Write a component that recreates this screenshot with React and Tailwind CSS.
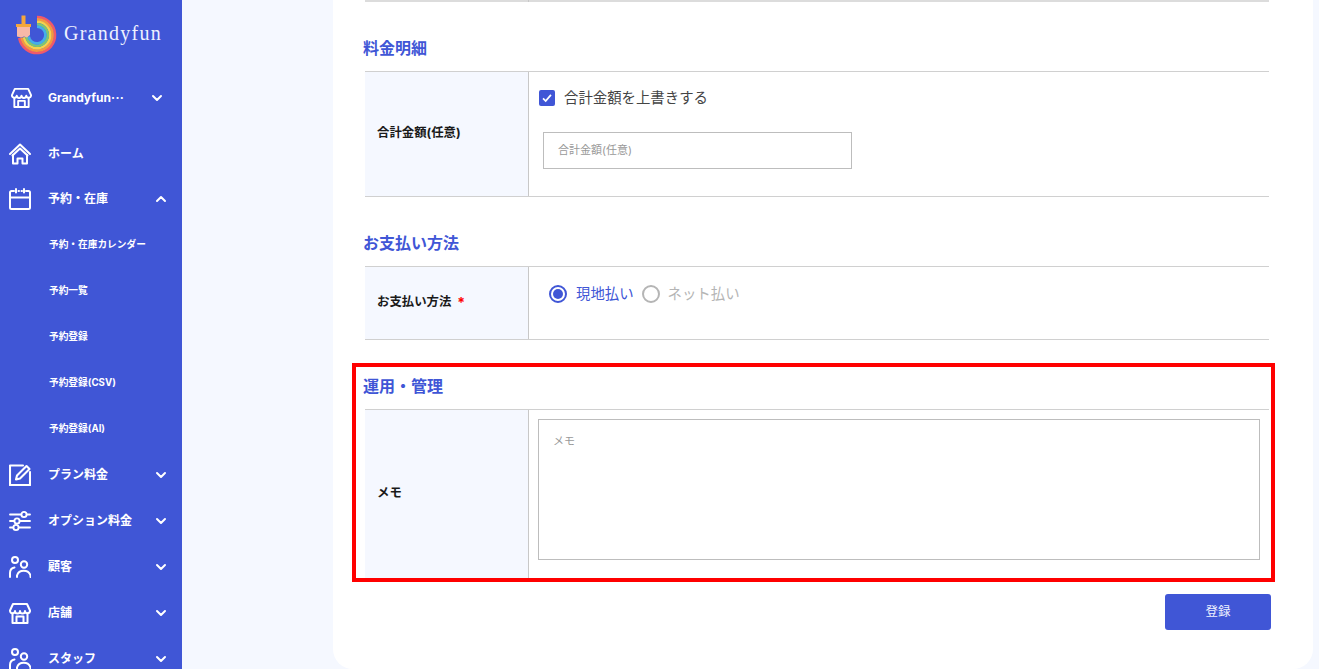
import { ChevronDown, ChevronUp } from "lucide-react";

const StoreIcon = ({ className }) => (
  <svg viewBox="0 0 22 22" fill="none" stroke="currentColor" strokeWidth="2" strokeLinejoin="round" strokeLinecap="round" className={className}>
    <path d="M4 2h14l3 6.500a2.500 2.500 0 0 1-5 .5 2.500 2.500 0 0 1-5 0 2.500 2.500 0 0 1-5 0 2.500 2.500 0 0 1-5-.5L4 2Z" />
    <path d="M3.500 11.500V21h15v-9.500" />
    <path d="M7.500 21v-6.500h7V21" />
  </svg>
);

const HomeIcon = ({ className }) => (
  <svg viewBox="0 0 22 22" fill="none" stroke="currentColor" strokeWidth="2" strokeLinejoin="round" strokeLinecap="round" className={className}>
    <path d="M1 11 11 1.500 21 11" />
    <path d="M3.500 12.500 11 5.500l7.500 7" />
    <path d="M4 12v8.500h4.500v-5h5v5H18V12" />
  </svg>
);

const CalendarIcon = ({ className }) => (
  <svg viewBox="0 0 22 22" fill="none" stroke="currentColor" strokeWidth="2" strokeLinejoin="round" strokeLinecap="round" className={className}>
    <path d="M5 3H2.500A1.500 1.500 0 0 0 1 4.500v15A1.500 1.500 0 0 0 2.500 21h17a1.500 1.500 0 0 0 1.500-1.500v-15A1.500 1.500 0 0 0 19.500 3H17" />
    <path d="M9.500 3h.5M12.500 3h.5M7 1v3.500M15 1v3.500M1 9.500h20" />
  </svg>
);

const EditIcon = ({ className }) => (
  <svg viewBox="0 0 22 22" fill="none" stroke="currentColor" strokeWidth="2.100" strokeLinejoin="round" strokeLinecap="round" className={className}>
    <path d="M14 1.500H1V21h20V8" />
    <path d="M7 15.500l1-4L17.500 2l3 3-9.500 9.500-4 1Z" />
  </svg>
);

const SlidersIcon = ({ className }) => (
  <svg viewBox="0 0 22 22" fill="none" stroke="currentColor" strokeWidth="1.900" strokeLinecap="round" className={className}>
    <path d="M1 4.500h11M18 4.500h3M1 11h4M11 11h10M1 17.500h3M10 17.500h11" />
    <circle cx="15" cy="4.500" r="2.600" />
    <circle cx="8" cy="11" r="2.600" />
    <circle cx="7" cy="17.500" r="2.600" />
  </svg>
);

const UsersIcon = ({ className }) => (
  <svg viewBox="0 0 22 22" fill="none" stroke="currentColor" strokeWidth="2" strokeLinecap="round" className={className}>
    <circle cx="6" cy="4" r="3" />
    <circle cx="15" cy="8.500" r="3.200" />
    <path d="M1 21v-4c0-3 1.500-5 4.500-5.500" />
    <path d="M8 21v-1.500a7 6.500 0 0 1 13.500 0V21" />
  </svg>
);

const Logo = () => (
  <svg viewBox="0 0 44 44" width="44" height="44" fill="none" className="shrink-0">
    <path d="M22 3A18 18 0 1 1 4.270 24.060" stroke="#f0596b" strokeWidth="2.600" />
    <path d="M22 5.400A15.600 15.600 0 1 1 6.630 23.650" stroke="#f7963f" strokeWidth="2.600" />
    <path d="M22 7.800A13.200 13.200 0 1 1 9 23.240" stroke="#f6d24c" strokeWidth="2.600" />
    <path d="M22 10.200A10.800 10.800 0 1 1 11.360 22.840" stroke="#7cc576" strokeWidth="2.600" />
    <path d="M22 12.600A8.400 8.400 0 1 1 13.730 22.430" stroke="#45aee8" strokeWidth="2.600" />
    <path d="M6.500 1.500h4v9h-4z" fill="#f5a63b" />
    <path d="M1 10h15v3H1z" fill="#f5a63b" />
    <path d="M2 13h13v8l-3 2.500-3-1-3 1-4-1z" fill="#f8b9a8" />
  </svg>
);

const navTop = [
  { label: "ホーム", icon: HomeIcon, noMenu: true },
  { label: "予約・在庫", icon: CalendarIcon, open: true },
];
const subItems = ["予約・在庫カレンダー", "予約一覧", "予約登録", "予約登録(CSV)", "予約登録(AI)"];
const navBottom = [
  { label: "プラン料金", icon: EditIcon },
  { label: "オプション料金", icon: SlidersIcon },
  { label: "顧客", icon: UsersIcon },
  { label: "店舗", icon: StoreIcon },
  { label: "スタッフ", icon: UsersIcon },
];

const NavItem = ({ item }) => (
  <div className="flex h-[46px] shrink-0 items-center pl-[9px] pr-[13px]">
    <item.icon className="h-[22px] w-[22px] shrink-0" />
    <span className="ml-[17px] flex-1 whitespace-nowrap text-[12px] font-bold">{item.label}</span>
    {!item.noMenu && (item.open ? <ChevronUp size={16} strokeWidth={3} /> : <ChevronDown size={16} strokeWidth={3} />)}
  </div>
);

const Sidebar = () => (
  <aside className="flex h-[669px] w-[182px] shrink-0 flex-col overflow-hidden bg-[#4056d6] text-white">
    <div className="flex h-[74px] shrink-0 items-start pl-[15px] pt-[14px]">
      <Logo />
      <span className="ml-[5px] mt-[4px] font-['Liberation_Serif',serif] text-[20px] tracking-[1.250px] text-[#eef1ff]">Grandyfun</span>
    </div>
    <div className="mb-[10px] flex h-[46px] shrink-0 items-center pl-[11px] pr-[17px] pt-px">
      <StoreIcon className="h-[21px] w-[21px] shrink-0" />
      <span className="ml-[16px] flex-1 whitespace-nowrap text-[12px] font-bold">
        Grandyfun<span className="tracking-[0.4px]">···</span>
      </span>
      <ChevronDown size={16} strokeWidth={3} />
    </div>
    <div className="flex h-[46px] shrink-0 flex-col pt-px">
      <NavItem item={navTop[0]} />
    </div>
    <div className="h-[46px] shrink-0">
      <NavItem item={navTop[1]} />
    </div>
    {subItems.map((label) => (
      <div key={label} className="flex h-[46px] shrink-0 items-center whitespace-nowrap pl-[49px] text-[9.700px] font-bold">
        {label}
      </div>
    ))}
    {navBottom.map((item) => (
      <NavItem key={item.label} item={item} />
    ))}
  </aside>
);

const SectionTitle = ({ children }) => (
  <h2 className="ml-[-2px] text-[16px] font-bold leading-[24px] text-[#4056d6]">{children}</h2>
);

const Row = ({ label, required, height, children }) => (
  <div className="flex border-y border-[#d0d0d0]" style={{ height }}>
    <div className="flex w-[164px] shrink-0 items-center border-r border-[#c8c8c8] bg-[#f5f8ff] pb-px pl-[12px] text-[12.400px] font-bold text-[#1a1a1a]">
      {label}
      {required && <span className="ml-[6px] text-[14px] text-[#f00]">*</span>}
    </div>
    <div className="min-w-0 flex-1">{children}</div>
  </div>
);

const Form = () => (
  <div className="flex flex-col pl-[32px] pr-[44px]">
    <div className="flex h-[2px] bg-[#dcdcdc]">
      <div className="ml-[163px] w-px bg-[#c8c8c8]" />
    </div>
    <div className="mt-[34px]">
      <SectionTitle>料金明細</SectionTitle>
    </div>
    <div className="mt-[11px]">
      <Row label="合計金額(任意)" height={126}>
        <div className="flex items-center pl-[10px] pt-[18px]">
          <span className="flex h-[16px] w-[16px] items-center justify-center rounded-[2px] bg-[#4056d6] text-white">
            <svg viewBox="0 0 16 16" className="h-[14px] w-[14px]" fill="none" stroke="currentColor" strokeWidth="2">
              <path d="M3.500 8.500 6.500 11.500 12.500 4.500" />
            </svg>
          </span>
          <span className="ml-[9px] text-[14.400px] leading-[16px] text-[#444]">合計金額を上書きする</span>
        </div>
        <div className="ml-[14px] mt-[26px] flex h-[37px] w-[309px] items-center border border-[#bdbdbd] pl-[14px] text-[11px] text-[#999]">
          合計金額(任意)
        </div>
      </Row>
    </div>
    <div className="mt-[34px]">
      <SectionTitle>お支払い方法</SectionTitle>
    </div>
    <div className="mt-[11px]">
      <Row label="お支払い方法" required height={74}>
        <div className="flex items-center pl-[20px] pt-[18px] text-[14.400px] leading-[18px]">
          <span className="flex h-[18px] w-[18px] items-center justify-center rounded-full border-2 border-[#4056d6]">
            <span className="h-[10px] w-[10px] rounded-full bg-[#4056d6]" />
          </span>
          <span className="ml-[9px] text-[#4056d6]">現地払い</span>
          <span className="ml-[8px] h-[18px] w-[18px] rounded-full border-2 border-[#b5b5b5]" />
          <span className="ml-[8px] text-[#b5b5b5]">ネット払い</span>
        </div>
      </Row>
    </div>
    <div className="ml-[-13px] mr-[-6px] mt-[23px] h-[219px] overflow-hidden border-4 border-[#f00] pl-[9px] pr-[2px]">
      <div className="mt-[7px]">
        <SectionTitle>運用・管理</SectionTitle>
      </div>
      <div className="mt-[11px]">
        <Row label="メモ" height={170}>
          <div className="ml-[9px] mr-[9px] mt-[9px] h-[141px] border border-[#bdbdbd] pl-[14px] pt-[14px] text-[11px] leading-[14px] text-[#999]">
            メモ
          </div>
        </Row>
      </div>
    </div>
    <div className="mr-[-2px] mt-[12px] flex justify-end">
      <button className="h-[36px] w-[106px] rounded-[3px] bg-[#4056d6] pt-px text-[12.500px] text-[#eef1ff]">登録</button>
    </div>
  </div>
);

export default function App() {
  return (
    <div className="flex h-[669px] w-[1319px] overflow-hidden bg-[#f5f8ff] font-['Inter','Noto_Sans_CJK_JP',sans-serif]">
      <Sidebar />
      <main className="ml-[151px] mr-[6px] h-[669px] flex-1 rounded-b-[20px] bg-white">
        <Form />
      </main>
    </div>
  );
}
